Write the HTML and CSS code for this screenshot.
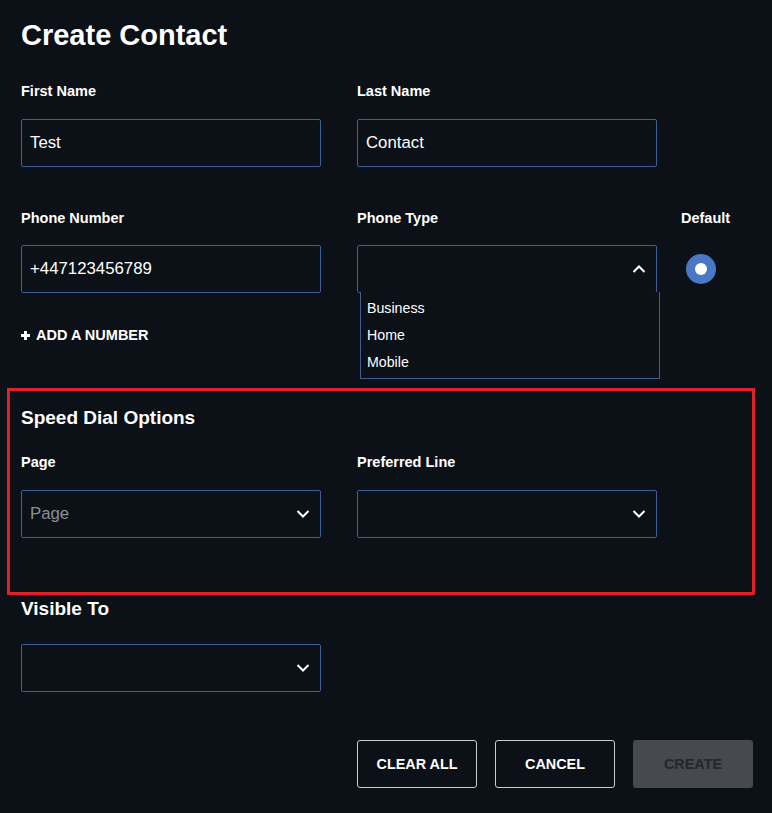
FILE: index.html
```html
<!DOCTYPE html>
<html>
<head>
    <meta charset="UTF-8">
    <meta name="viewport" content="width=device-width, initial-scale=1.0">
    <title>Create Contact</title>
    <link rel="stylesheet" href="styles.css">
</head>
<body>
    <div class="contact-form">
        <h1>Create Contact</h1>

        <div class="row names">
            <div class="field">
                <label>First Name</label>
                <div class="box">Test</div>
            </div>
            <div class="field">
                <label>Last Name</label>
                <div class="box">Contact</div>
            </div>
        </div>

        <div class="row phones">
            <div class="field">
                <label>Phone Number</label>
                <div class="box">+447123456789</div>
            </div>
            <div class="field">
                <label>Phone Type</label>
                <div class="box select open">
                    <span></span>
                    <svg class="chev" width="14" height="8" viewBox="0 0 14 8"><path d="M1.5 7 L7 1.5 L12.5 7" fill="none" stroke="#fff" stroke-width="2"/></svg>
                    <ul class="options">
                        <li>Business</li>
                        <li>Home</li>
                        <li>Mobile</li>
                    </ul>
                </div>
            </div>
            <div class="field default">
                <label>Default</label>
                <div class="radio-wrap">
                    <span class="radio"></span>
                </div>
            </div>
        </div>

        <div class="add-number">
            <svg width="9" height="9" viewBox="0 0 9 9"><path d="M4.5 0 V9 M0 4.5 H9" stroke="#fff" stroke-width="3"/></svg>
            <span>ADD A NUMBER</span>
        </div>

        <div class="speed-dial">
            <h3>Speed Dial Options</h3>
            <div class="row">
                <div class="field">
                    <label>Page</label>
                    <div class="box select">
                        <span class="placeholder">Page</span>
                        <svg class="chev" width="14" height="8" viewBox="0 0 14 8"><path d="M1.5 1 L7 6.5 L12.5 1" fill="none" stroke="#fff" stroke-width="2"/></svg>
                    </div>
                </div>
                <div class="field">
                    <label>Preferred Line</label>
                    <div class="box select">
                        <span></span>
                        <svg class="chev" width="14" height="8" viewBox="0 0 14 8"><path d="M1.5 1 L7 6.5 L12.5 1" fill="none" stroke="#fff" stroke-width="2"/></svg>
                    </div>
                </div>
            </div>
        </div>

        <h3 class="visible-title">Visible To</h3>
        <div class="row">
            <div class="field">
                <div class="box select">
                    <span></span>
                    <svg class="chev" width="14" height="8" viewBox="0 0 14 8"><path d="M1.5 1 L7 6.5 L12.5 1" fill="none" stroke="#fff" stroke-width="2"/></svg>
                </div>
            </div>
        </div>

        <div class="actions">
            <button class="outline">CLEAR ALL</button>
            <button class="outline">CANCEL</button>
            <button class="disabled">CREATE</button>
        </div>
    </div>
</body>
</html>
```
FILE: styles.css
```css
body {
    margin: 0;
    background: #0c1017;
    color: #fff;
    font-family: "Liberation Sans", Arial, sans-serif;
}

.contact-form {
    padding: 19px 19px 0 21px;
}

h1 {
    margin: 0;
    font-size: 29px;
    line-height: 32px;
    font-weight: bold;
}

.row {
    display: flex;
    gap: 36px;
}

.names {
    margin-top: 32px;
}

.phones {
    margin-top: 43px;
}

.field {
    width: 300px;
}

.field label {
    display: block;
    font-size: 14.5px;
    line-height: 16px;
    font-weight: bold;
    margin-bottom: 19px;
}

.names .field label {
    margin-bottom: 20px;
}

.box {
    position: relative;
    box-sizing: border-box;
    height: 48px;
    border: 1px solid #3f5f93;
    border-radius: 2px;
    padding: 0 10px 0 8px;
    display: flex;
    align-items: center;
    font-size: 16.8px;
}

.select {
    justify-content: space-between;
}

.placeholder {
    color: #8c8f95;
}

.options {
    position: absolute;
    left: 2px;
    top: 100%;
    width: 300px;
    box-sizing: border-box;
    margin: 0;
    padding: 3px 0 2px 6px;
    list-style: none;
    border: 1px solid #3f5f93;
    border-top: none;
    background: #0c1017;
    z-index: 2;
}

.options li {
    font-size: 14.2px;
    line-height: 27px;
}

.default {
    width: auto;
    margin-left: -12px;
}

.radio-wrap {
    height: 48px;
    display: flex;
    align-items: center;
    padding-left: 5px;
}

.radio {
    width: 30px;
    height: 30px;
    border-radius: 50%;
    background: #4b78c6;
    display: flex;
    align-items: center;
    justify-content: center;
}

.radio::after {
    content: "";
    width: 12px;
    height: 12px;
    border-radius: 50%;
    background: #fff;
}

.add-number {
    margin-top: 34px;
    display: flex;
    align-items: center;
    gap: 6px;
    font-size: 14.5px;
    line-height: 16px;
    font-weight: bold;
}

.speed-dial {
    margin: 45px -2px 0 -14px;
    border: 3px solid #e0212b;
    padding: 16px 0 54px 11px;
}

h3 {
    margin: 0;
    font-size: 19px;
    line-height: 22px;
    font-weight: bold;
}

.speed-dial .row {
    margin-top: 25px;
}

.speed-dial .field label {
    margin-bottom: 20px;
}

.visible-title {
    margin-top: 3px;
    margin-bottom: 24px;
}

.actions {
    margin-top: 48px;
    display: flex;
    justify-content: flex-end;
    gap: 18px;
}

.actions button {
    width: 120px;
    height: 48px;
    border-radius: 3px;
    font-family: "Liberation Sans", Arial, sans-serif;
    font-size: 14.4px;
    font-weight: bold;
    cursor: pointer;
}

.outline {
    background: transparent;
    color: #fff;
    border: 1px solid #c9cbce;
}

.disabled {
    background: #46494e;
    color: #24272b;
    border: none;
}
```
